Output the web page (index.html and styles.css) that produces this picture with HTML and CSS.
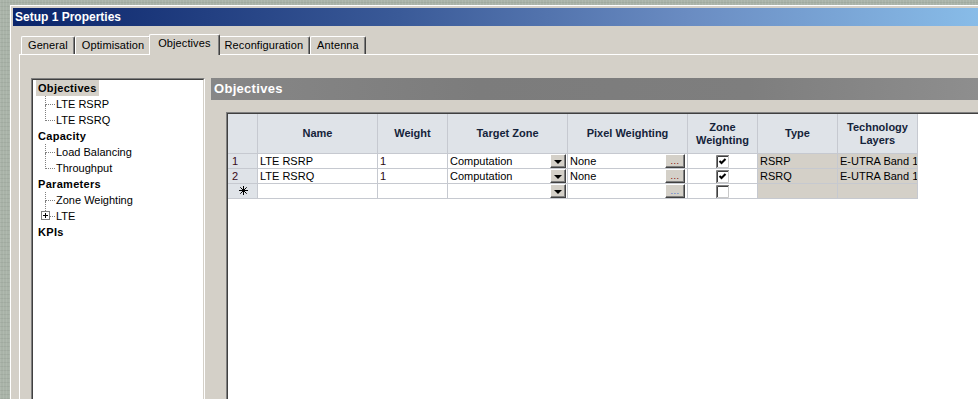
FILE: index.html
```html
<!DOCTYPE html>
<html lang="en">
<head>
  <meta charset="UTF-8">
  <title>Setup 1 Properties</title>
  <link rel="stylesheet" href="styles.css">
</head>
<body>
  <div class="window">
    <div class="titlebar">Setup 1 Properties</div>

    <div class="dialog">
      <div class="tabs">
        <div class="tab">General</div>
        <div class="tab">Optimisation</div>
        <div class="tab active">Objectives</div>
        <div class="tab">Reconfiguration</div>
        <div class="tab">Antenna</div>
      </div>

      <div class="tab-page">
        <!-- navigation tree -->
        <div class="tree-box">
          <div class="tree">
            <div class="node"><span class="label selected">Objectives</span></div>
            <div class="leaf"><span class="elbow"></span>LTE RSRP</div>
            <div class="leaf last"><span class="elbow"></span>LTE RSRQ</div>
            <div class="node"><span class="label">Capacity</span></div>
            <div class="leaf"><span class="elbow"></span>Load Balancing</div>
            <div class="leaf last"><span class="elbow"></span>Throughput</div>
            <div class="node"><span class="label">Parameters</span></div>
            <div class="leaf"><span class="elbow"></span>Zone Weighting</div>
            <div class="leaf last">
              <span class="elbow">
                <svg class="expander" width="9" height="9" viewBox="0 0 9 9">
                  <rect x="0.5" y="0.5" width="8" height="8" fill="#fff" stroke="#808080"/>
                  <path d="M2 4.5h5M4.5 2v5" stroke="#000"/>
                </svg>
              </span>LTE
            </div>
            <div class="node"><span class="label">KPIs</span></div>
          </div>
        </div>

        <div class="content">
          <div class="section-title">Objectives</div>

          <div class="grid-frame">
            <div class="grid">
              <table>
                <thead>
                  <tr>
                    <th class="c-row"></th>
                    <th class="c-name">Name</th>
                    <th class="c-weight">Weight</th>
                    <th class="c-zone">Target Zone</th>
                    <th class="c-pixel">Pixel Weighting</th>
                    <th class="c-zw">Zone<br>Weighting</th>
                    <th class="c-type">Type</th>
                    <th class="c-tech">Technology<br>Layers</th>
                  </tr>
                </thead>
                <tbody>
                  <tr>
                    <td class="row-head">1</td>
                    <td>LTE RSRP</td>
                    <td class="num">1</td>
                    <td><div class="combo"><span>Computation</span><span class="drop"></span></div></td>
                    <td><div class="combo"><span>None</span><span class="dots">...</span></div></td>
                    <td class="check-cell">
                      <svg width="13" height="13" viewBox="0 0 13 13">
                        <rect width="13" height="13" fill="#fff"/>
                        <path d="M12.5 0v12.5H0" stroke="#c8c8c8" fill="none"/>
                        <path d="M0.5 13V0.5H13" stroke="#808080" fill="none"/>
                        <path d="M1.5 12V1.5H12" stroke="#404040" fill="none"/>
                        <path d="M3.5 6l2 2 4-4" stroke="#000" stroke-width="2" fill="none"/>
                      </svg>
                    </td>
                    <td class="ro">RSRP</td>
                    <td class="ro">E-UTRA Band 1</td>
                  </tr>
                  <tr>
                    <td class="row-head">2</td>
                    <td>LTE RSRQ</td>
                    <td class="num">1</td>
                    <td><div class="combo"><span>Computation</span><span class="drop"></span></div></td>
                    <td><div class="combo"><span>None</span><span class="dots">...</span></div></td>
                    <td class="check-cell">
                      <svg width="13" height="13" viewBox="0 0 13 13">
                        <rect width="13" height="13" fill="#fff"/>
                        <path d="M12.5 0v12.5H0" stroke="#c8c8c8" fill="none"/>
                        <path d="M0.5 13V0.5H13" stroke="#808080" fill="none"/>
                        <path d="M1.5 12V1.5H12" stroke="#404040" fill="none"/>
                        <path d="M3.5 6l2 2 4-4" stroke="#000" stroke-width="2" fill="none"/>
                      </svg>
                    </td>
                    <td class="ro">RSRQ</td>
                    <td class="ro">E-UTRA Band 1</td>
                  </tr>
                  <tr>
                    <td class="row-head new">
                      <svg width="9" height="9" viewBox="0 0 9 9">
                        <path d="M4.5 0v9M0 4.5h9M1.3 1.3l6.4 6.4M7.7 1.3l-6.4 6.4" stroke="#000"/>
                      </svg>
                    </td>
                    <td></td>
                    <td></td>
                    <td><div class="combo"><span></span><span class="drop"></span></div></td>
                    <td><div class="combo"><span></span><span class="dots blank">...</span></div></td>
                    <td class="check-cell">
                      <svg width="13" height="13" viewBox="0 0 13 13">
                        <rect width="13" height="13" fill="#fff"/>
                        <path d="M12.5 0v12.5H0" stroke="#c8c8c8" fill="none"/>
                        <path d="M0.5 13V0.5H13" stroke="#808080" fill="none"/>
                        <path d="M1.5 12V1.5H12" stroke="#404040" fill="none"/>
                      </svg>
                    </td>
                    <td class="ro"></td>
                    <td class="ro"></td>
                  </tr>
                </tbody>
              </table>
            </div>
          </div>
        </div>
      </div>
    </div>
  </div>
</body>
</html>
```

FILE: styles.css
```css
* {
  margin: 0;
  padding: 0;
  box-sizing: border-box;
}

html, body {
  height: 399px;
  overflow: hidden;
}

body {
  font-family: "Liberation Sans", Arial, sans-serif;
  font-size: 11px;
  color: #000;
  background: #a9b3a8;
  background-image:
    repeating-linear-gradient(90deg, rgba(255,255,255,0.08) 0 1px, transparent 1px 3px),
    repeating-linear-gradient(0deg, rgba(0,0,0,0.05) 0 1px, transparent 1px 4px);
}

/* window chrome */

.window {
  margin: 5px 0 0 10px;
  border-top: 1px solid #fff;
  border-left: 1px solid #fff;
  padding: 2px 0 0 2px;
  background: #d4d0c8;
  height: 394px;
  display: flex;
  flex-direction: column;
}

.titlebar {
  height: 18px;
  line-height: 18px;
  padding-left: 2px;
  color: #fff;
  font-size: 12px;
  font-weight: bold;
  background: linear-gradient(to right, #0a246a 0%, #3a5a98 40%, #6a8cc2 70%, #88bce8 100%);
}

.dialog {
  flex: 1;
  padding-left: 6px;
  display: flex;
  flex-direction: column;
}

/* tabs */

.tabs {
  height: 28px;
  padding-left: 2px;
  display: flex;
  align-items: flex-end;
}

.tab {
  height: 18px;
  line-height: 17px;
  padding: 0 6px;
  border-top: 1px solid #fff;
  border-left: 1px solid #fff;
  border-right: 1px solid #404040;
  border-radius: 2px 2px 0 0;
  box-shadow: inset -1px 0 #808080;
  color: #000;
  letter-spacing: 0.1px;
  white-space: nowrap;
}

.tab.active {
  position: relative;
  z-index: 1;
  height: 21px;
  margin: 0 -2px -1px;
  padding: 0 8px;
  line-height: 16px;
  background: #d4d0c8;
}

.tab-page {
  flex: 1;
  border-top: 1px solid #fff;
  border-left: 1px solid #fff;
  padding: 23px 0 0 11px;
  display: flex;
  gap: 6px;
}

/* tree */

.tree-box {
  width: 174px;
  border: 1px solid;
  border-bottom: none;
  border-color: #808080 #fff #fff #808080;
  background: #fff;
}

.tree {
  height: 100%;
  border: 1px solid;
  border-bottom: none;
  border-color: #404040 #d4d0c8 #d4d0c8 #404040;
}

.node,
.leaf {
  height: 16px;
  line-height: 16px;
  display: flex;
  align-items: center;
  white-space: nowrap;
}

.label {
  margin-left: 3px;
  padding: 0 2px;
  font-weight: bold;
  letter-spacing: 0.3px;
  line-height: 16px;
}

.label.selected {
  background: #d4d0c8;
}

.elbow {
  position: relative;
  width: 10px;
  height: 16px;
  margin: 0 1px 0 12px;
  align-self: flex-start;
}

.elbow::before {
  content: "";
  display: block;
  height: 8px;
  border-left: 1px dotted #808080;
  border-bottom: 1px dotted #808080;
}

.elbow::after {
  content: "";
  display: block;
  height: 8px;
  border-left: 1px dotted #808080;
}

.leaf.last .elbow::after {
  border-left: none;
}

.expander {
  position: absolute;
  left: -4px;
  top: 3px;
}

/* right side */

.content {
  flex: 1;
  display: flex;
  flex-direction: column;
}

.section-title {
  height: 22px;
  line-height: 21px;
  padding-left: 3px;
  color: #fff;
  font-size: 13px;
  font-weight: bold;
  letter-spacing: 0.3px;
  background: linear-gradient(to right, #878787 0%, #7c7c7c 35%, #7e7e7e 70%, #8e8e8e 100%);
}

.grid-frame {
  flex: 1;
  margin: 12px 0 0 15px;
  border-top: 1px solid #808080;
  border-left: 1px solid #808080;
}

.grid {
  height: 100%;
  border-top: 1px solid #404040;
  border-left: 1px solid #404040;
  background: #fff;
}

table {
  border-collapse: separate;
  border-spacing: 0;
  table-layout: fixed;
  width: 690px;
}

th,
td {
  border-right: 1px solid #c6c9d0;
  border-bottom: 1px solid #c6c9d0;
  white-space: nowrap;
  overflow: hidden;
}

th {
  height: 40px;
  background: #dfe3e8;
  color: #15233a;
  font-weight: bold;
  line-height: 13px;
  text-align: center;
  vertical-align: middle;
}

td {
  height: 15px;
  line-height: 14px;
  padding: 0 2px;
  vertical-align: top;
}

.c-row { width: 30px; }
.c-name { width: 120px; }
.c-weight { width: 70px; }
.c-zone { width: 120px; }
.c-pixel { width: 120px; }
.c-zw { width: 70px; }
.c-type { width: 80px; }
.c-tech { width: 80px; }

.row-head {
  background: #dfe3e8;
  color: #3a0a18;
  padding-left: 4px;
}

.row-head.new {
  padding-left: 11px;
}

.row-head.new svg {
  display: block;
  margin-top: 2px;
}

.num {
  color: #2a0810;
}

.ro {
  background: #d4d0c8;
}

.combo {
  display: flex;
  justify-content: space-between;
  align-items: flex-start;
  height: 14px;
  margin-right: -1px;
}

.drop {
  width: 16px;
  height: 14px;
  border: 1px solid;
  border-color: #fff #404040 #404040 #fff;
  box-shadow: inset -1px -1px #808080;
  background: #d4d0c8;
  display: flex;
  align-items: center;
  justify-content: center;
}

.drop::after {
  content: "";
  border-left: 4px solid transparent;
  border-right: 4px solid transparent;
  border-top: 4px solid #000;
  margin-top: 1px;
}

.dots {
  width: 20px;
  height: 14px;
  margin-right: 1px;
  border: 1px solid;
  border-color: #fff #404040 #404040 #fff;
  box-shadow: inset -1px -1px #808080;
  background: #d4d0c8;
  color: #800000;
  font-size: 9px;
  line-height: 13px;
  text-align: center;
  letter-spacing: 0.5px;
}

.dots.blank {
  color: #3a6ad0;
}

.check-cell {
  text-align: center;
}

.check-cell svg {
  display: block;
  margin: 1px auto 0;
}
```
